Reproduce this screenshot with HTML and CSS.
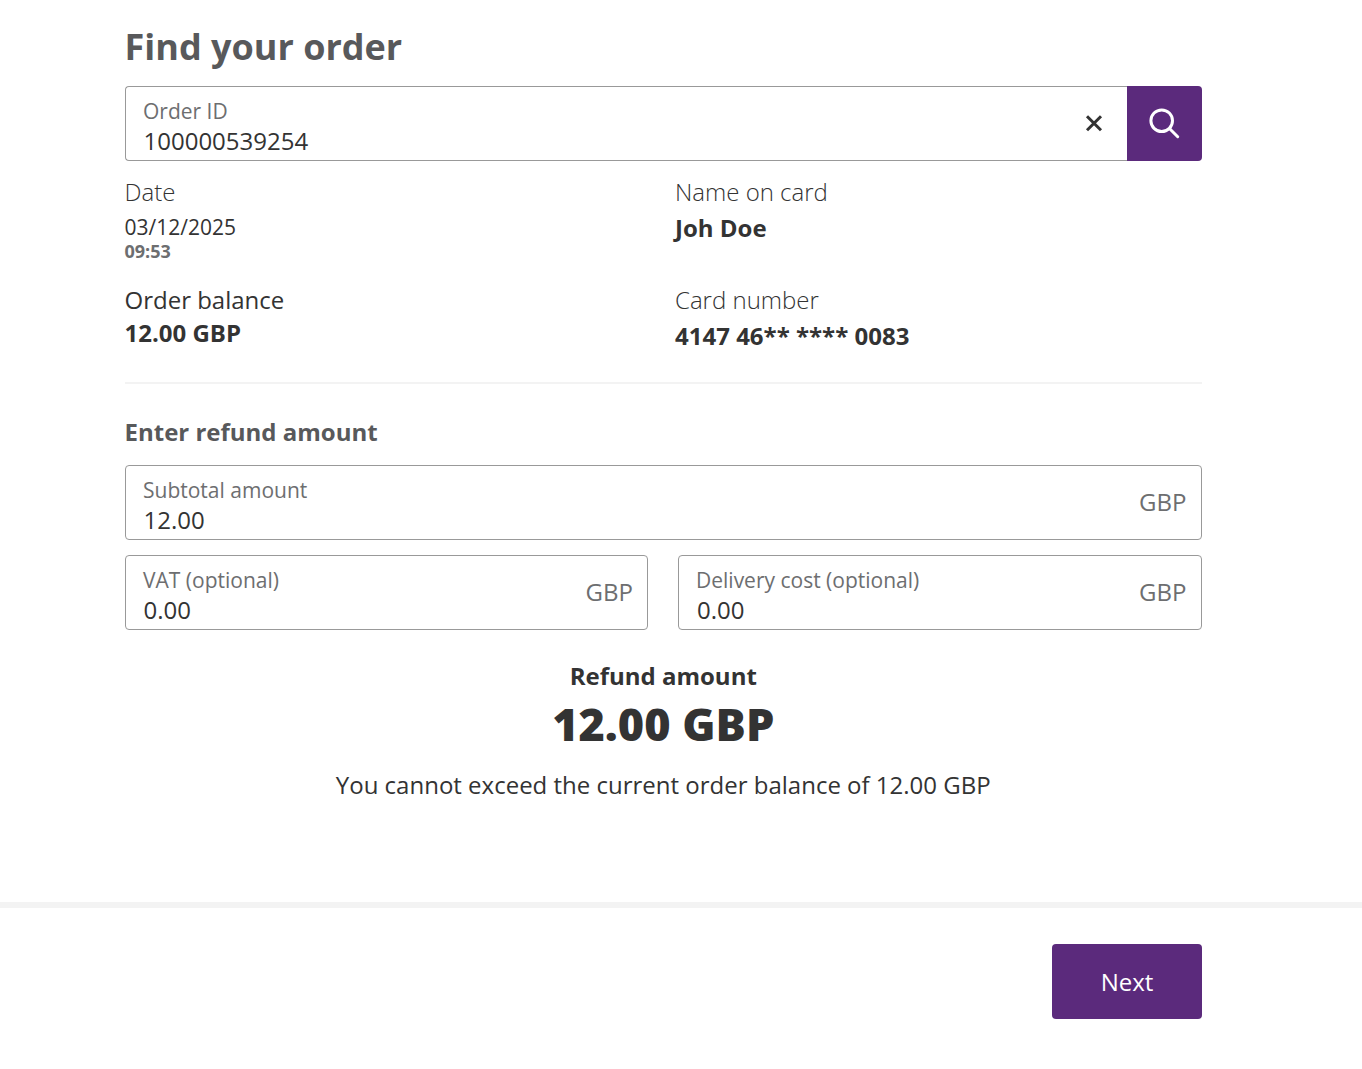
FILE: index.html
```html
<!DOCTYPE html>
<html lang="en">
<head>
<meta charset="utf-8">
<title>Find your order</title>
<link rel="stylesheet" href="styles.css">
</head>
<body>
<main class="content">
  <h1 class="title">Find your order</h1>
  <div class="search">
    <div class="field field-search">
      <div class="field-text">
        <span class="field-label">Order ID</span>
        <span class="field-value">100000539254</span>
      </div>
      <svg class="clear" width="18" height="18" viewBox="0 0 18 18" aria-hidden="true"><path d="M2 1.2l14 14M16 1.2l-14 14" stroke="#333" stroke-width="3" fill="none"/></svg>
    </div>
    <button class="search-btn" aria-label="Search">
      <svg width="32" height="32" viewBox="0 0 32 32" aria-hidden="true"><circle cx="12.7" cy="12.7" r="10.8" stroke="#fff" stroke-width="3" fill="none"/><path d="M20.7 20.7l8 8" stroke="#fff" stroke-width="3" stroke-linecap="round" fill="none"/></svg>
    </button>
  </div>
  <div class="details">
    <div class="detail detail-top">
      <div class="detail-label light">Date</div>
      <div class="detail-date">03/12/2025</div>
      <div class="detail-time">09:53</div>
    </div>
    <div class="detail detail-top">
      <div class="detail-label light">Name on card</div>
      <div class="detail-strong detail-name">Joh Doe</div>
    </div>
    <div class="detail">
      <div class="detail-label">Order balance</div>
      <div class="detail-strong detail-balance">12.00 GBP</div>
    </div>
    <div class="detail">
      <div class="detail-label light">Card number</div>
      <div class="detail-strong detail-card">4147 46** **** 0083</div>
    </div>
  </div>
  <hr class="divider">
  <h2 class="subtitle">Enter refund amount</h2>
  <div class="amounts">
    <div class="field field-wide">
      <div class="field-text">
        <span class="field-label">Subtotal amount</span>
        <span class="field-value">12.00</span>
      </div>
      <span class="unit">GBP</span>
    </div>
    <div class="field field-left">
      <div class="field-text">
        <span class="field-label">VAT (optional)</span>
        <span class="field-value">0.00</span>
      </div>
      <span class="unit">GBP</span>
    </div>
    <div class="field field-right">
      <div class="field-text">
        <span class="field-label">Delivery cost (optional)</span>
        <span class="field-value">0.00</span>
      </div>
      <span class="unit">GBP</span>
    </div>
  </div>
  <section class="summary">
    <div class="summary-label">Refund amount</div>
    <div class="summary-value">12.00 GBP</div>
    <p class="summary-note">You cannot exceed the current order balance of 12.00 GBP</p>
  </section>
</main>
<footer class="footer">
  <button class="next">Next</button>
</footer>
</body>
</html>
```
FILE: styles.css
```css
* { box-sizing: border-box; }
html, body { margin: 0; padding: 0; background: #fff; }
body { font-family: "Open Sans", sans-serif; color: #333; }
.content { width: 1077.5px; margin-left: 124.5px; height: 902px; padding-top: 23px; }
.title { margin: 0; font-size: 36px; line-height: 47px; font-weight: 700; color: #58595b; }
.search { display: flex; margin-top: 16px; height: 75px; }
.field { display: flex; align-items: center; height: 75px; border: 1px solid #999; border-radius: 4px; padding: 0 14.5px 0 17.5px; background: #fff; }
.field-search { flex: 1; border-right: 0; border-radius: 4px 0 0 4px; padding-right: 24px; }
.field-left { padding-right: 14px; }
.field-right { padding-left: 17px; }
.field-right .field-value { padding-left: 1px; }
.field-text { flex: 1; align-self: flex-start; padding-top: 12px; display: flex; flex-direction: column; }
.field-label { font-size: 21px; line-height: 24px; color: #6d6e70; }
.field-value { font-size: 24px; line-height: 33px; margin-top: 1px; color: #333; padding-left: 0.5px; }
.clear { display: block; }
.search-btn { width: 75px; height: 75px; border: 0; padding: 0; background: #5b2a7c; border-radius: 0 4px 4px 0; display: flex; align-items: center; justify-content: center; }
.details { display: grid; grid-template-columns: 550.5px 1fr; margin-top: 15px; }
.detail { height: 90px; }
.detail-top { height: 108px; }
.detail-label { font-size: 24px; line-height: 32px; color: #333; }
.light { font-weight: 300; }
.detail-date { font-size: 21px; line-height: 27px; margin-top: 6px; color: #333; }
.detail-time { font-size: 18px; line-height: 20px; font-weight: 700; color: #6d6e70; }
.detail-strong { font-size: 24px; line-height: 32px; font-weight: 700; color: #333; }
.detail-name { margin-top: 4px; }
.detail-balance { margin-top: 1px; }
.detail-card { margin-top: 4px; }
.divider { border: 0; height: 2px; background: #f3f3f3; margin: 8px 0 0; }
.subtitle { margin: 32px 0 0; font-size: 24px; line-height: 32px; font-weight: 700; color: #58595b; }
.amounts { display: grid; grid-template-columns: 523.5px 524px; column-gap: 30px; row-gap: 15px; margin-top: 17px; }
.field-wide { grid-column: 1 / -1; }
.unit { font-size: 24px; line-height: 33px; padding-bottom: 2px; color: #6d6e70; }
.summary { text-align: center; margin-top: 30px; }
.summary-label { font-size: 24px; line-height: 32px; font-weight: 700; color: #333; }
.summary-value { font-size: 45px; line-height: 60px; font-weight: 800; color: #333; margin-top: 2px; }
.summary-note { margin: 15px 0 0; font-size: 24px; line-height: 32px; color: #333; }
.footer { border-top: 6px solid #f3f3f3; height: 167px; padding: 36px 160px 0 0; display: flex; justify-content: flex-end; align-items: flex-start; }
.next { width: 150px; height: 75px; border: 0; border-radius: 4px; background: #5b2a7c; color: #fff; font-family: inherit; font-size: 24px; font-weight: 535; }
```
